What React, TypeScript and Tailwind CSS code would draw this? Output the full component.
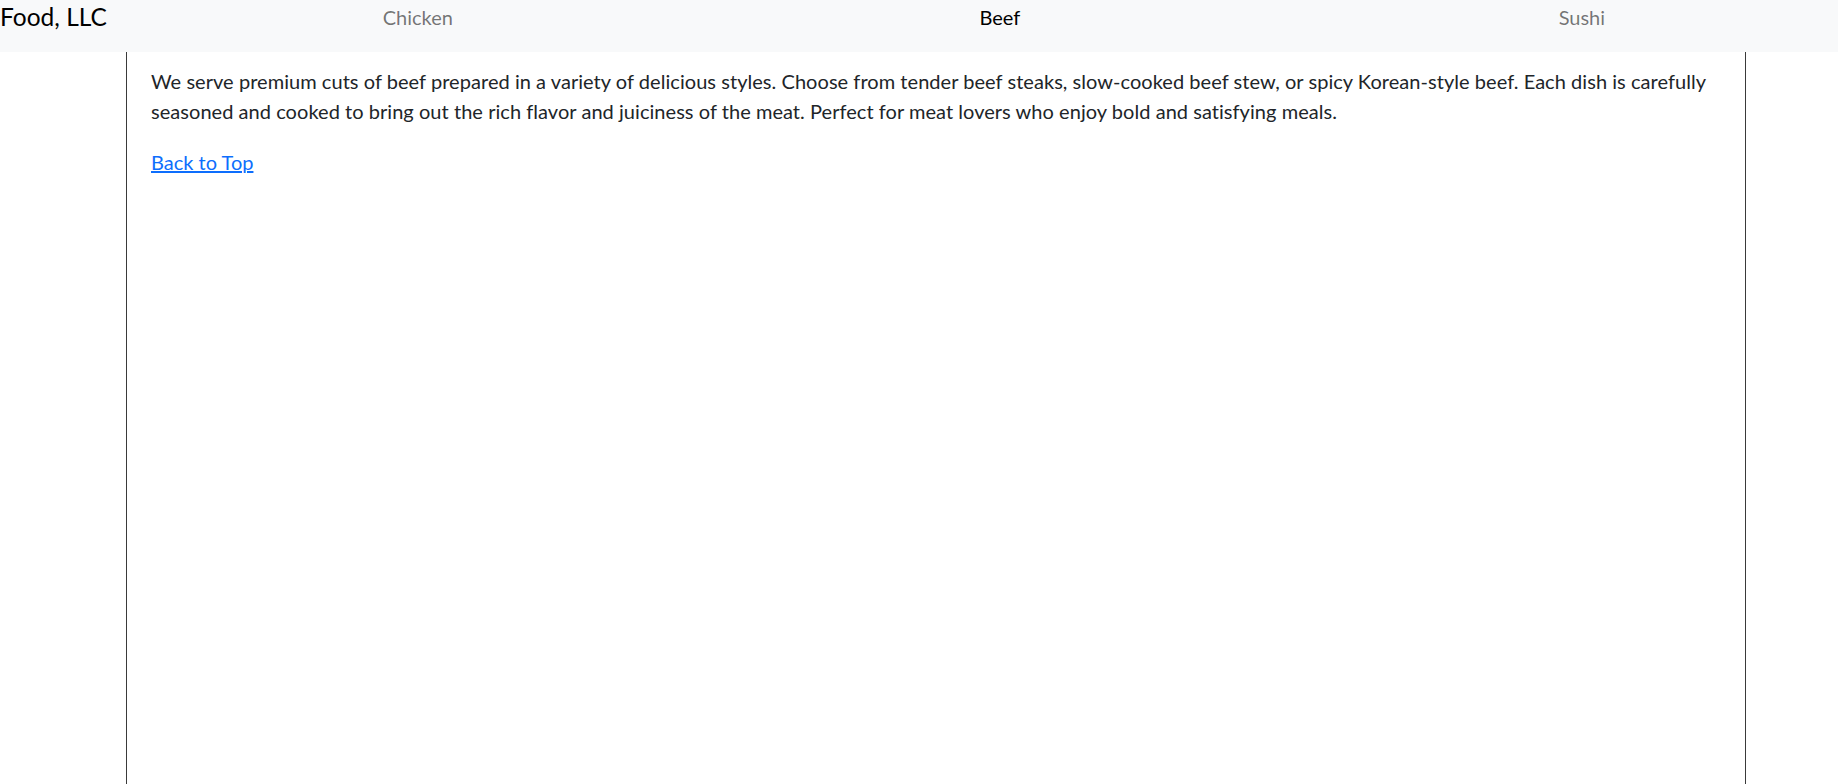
export default function App() {
  return (
    <div className="min-h-[784px] bg-white font-['Lato','Noto_Sans',sans-serif] text-[#212529]">
      <nav className="flex h-[52px] items-start overflow-hidden bg-[#f8f9fa]">
        <a href="#" className="text-[24.5px] leading-[34px] text-black whitespace-nowrap">
          Food, LLC
        </a>
        <ul className="ml-[20px] flex shrink-0 pt-[2px]">
          <li className="w-[582px] text-center text-[20px] leading-[30px]">
            <a href="#" className="text-[rgba(0,0,0,0.55)]">Chicken</a>
          </li>
          <li className="w-[582px] text-center text-[20px] leading-[30px]">
            <a href="#" className="text-black">Beef</a>
          </li>
          <li className="w-[582px] text-center text-[20px] leading-[30px]">
            <a href="#" className="text-[rgba(0,0,0,0.55)]">Sushi</a>
          </li>
        </ul>
      </nav>
      <main className="ml-[126px] w-[1620px] min-h-[732px] border-x border-[#3a3a3a] px-[24px] pt-[14px]">
        <p className="mb-[21px] text-[20px] leading-[30px] tracking-[0.045px]">
          We serve premium cuts of beef prepared in a variety of delicious styles. Choose from tender beef steaks,
          slow-cooked beef stew, or spicy Korean-style beef. Each dish is carefully seasoned and cooked to bring out
          the rich flavor and juiciness of the meat. Perfect for meat lovers who enjoy bold and satisfying meals.
        </p>
        <a href="#" className="text-[20px] leading-[30px] text-[#0d6efd] underline">
          Back to Top
        </a>
      </main>
    </div>
  );
}
